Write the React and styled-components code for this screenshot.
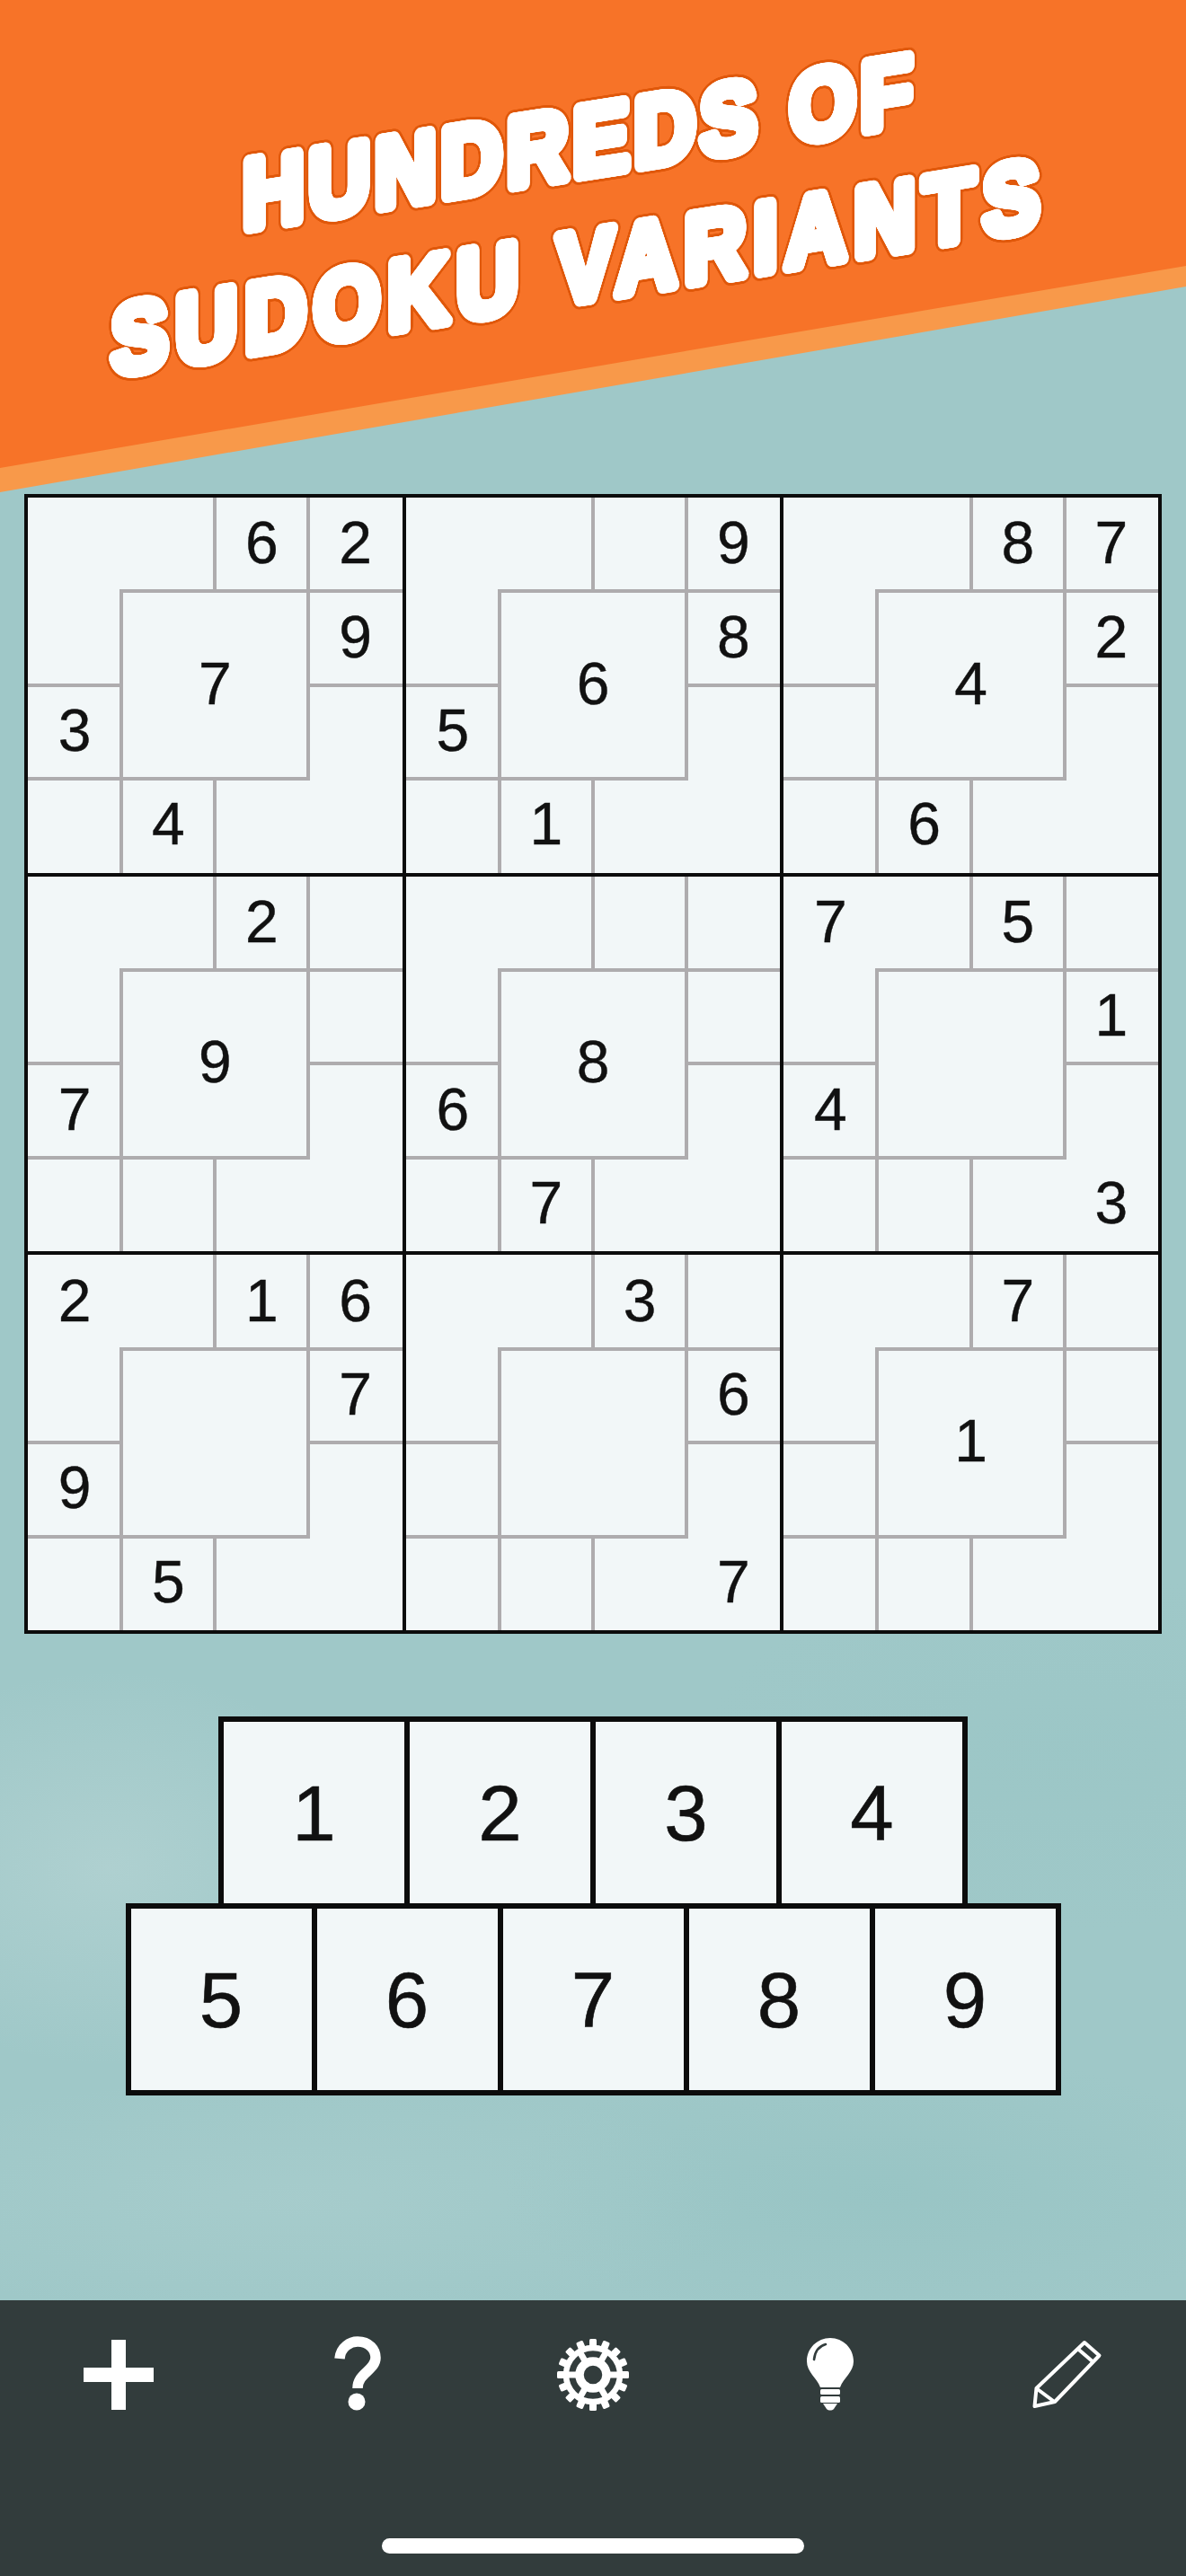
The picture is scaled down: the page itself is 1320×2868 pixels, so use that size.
import React from 'react'
import styled, { createGlobalStyle } from 'styled-components'

const BOXES = [
  '..62.793..4..',
  '...9.685..1..',
  '..87.42...6..',
  '..2..9.7.....',
  '.....8.6..7..',
  '7.5...14....3',
  '2.16..79..5..',
  '..3...6.....7',
  '..7..1.......',
]

// every box has the same regions; order follows the grid's auto placement
const CELLS = [
  {},
  { $right: true },
  { $right: true },
  { $bottom: true },
  { $bottom: true },
  { $center: true },
  { $bottom: true },
  { $bottom: true },
  {},
  { $right: true },
  { $right: true },
  {},
  {},
]

const ring = (radius, steps, color) =>
  Array.from({ length: steps }, (_, i) => {
    const angle = (i / steps) * Math.PI * 2
    const x = (Math.cos(angle) * radius).toFixed(2)
    const y = (Math.sin(angle) * radius).toFixed(2)
    return `${x}px ${y}px 0 ${color}`
  })

const TITLE_SHADOW = [
  ...ring(2.5, 12, '#fff'),
  ...ring(4.5, 24, '#fff'),
  ...ring(6.5, 36, '#fff'),
  ...ring(8, 36, '#e0590c'),
  ...ring(9.5, 44, '#e0590c'),
].join(', ')

function PlusIcon() {
  return (
    <svg width="78" height="78" viewBox="0 0 78 78" fill="#fff">
      <rect x="31" y="0" width="16" height="78" />
      <rect x="0" y="31" width="78" height="16" />
    </svg>
  )
}

function HelpIcon() {
  return (
    <svg width="110" height="110" viewBox="0 0 110 110">
      <path
        d="M37 37C38 24 49 18 57 18C70 18 77 27 77 36C77 50 57 53 57 70"
        fill="none"
        stroke="#fff"
        strokeWidth="11.5"
      />
      <circle cx="56" cy="85" r="9.5" fill="#fff" />
    </svg>
  )
}

function GearIcon() {
  const teeth = Array.from({ length: 16 }, (_, i) => (i * 360) / 16)
  const spokes = [30, 90, 150, 210, 270, 330]
  return (
    <svg width="82" height="82" viewBox="-41 -41 82 82" fill="#fff">
      {teeth.map((deg) => (
        <rect key={deg} x="-4" y="-40" width="8" height="10" rx="1.5" transform={`rotate(${deg})`} />
      ))}
      {spokes.map((deg) => (
        <rect key={deg} x="-3.5" y="-30" width="7" height="16" transform={`rotate(${deg})`} />
      ))}
      <circle r="30" fill="none" stroke="#fff" strokeWidth="6.5" />
      <circle r="15" fill="none" stroke="#fff" strokeWidth="9.5" />
    </svg>
  )
}

function BulbIcon() {
  return (
    <svg width="60" height="82" viewBox="0 0 60 82">
      <path
        fill="#fff"
        d="M30 0C15.6 0 4 11.6 4 26C4 38 15 44 19 55H41C45 44 56 38 56 26C56 11.6 44.4 0 30 0Z"
      />
      <path d="M12 24C13 14 18 9 25 7" fill="none" stroke="#323c3c" strokeWidth="2.6" strokeLinecap="round" />
      <rect x="19" y="57" width="22" height="6" rx="1.5" fill="#fff" />
      <rect x="19" y="65" width="22" height="7" rx="1.5" fill="#fff" />
      <path d="M22 73H38L34 79C32 81 28 81 26 79Z" fill="#fff" />
    </svg>
  )
}

function PencilIcon() {
  return (
    <svg width="78" height="78" viewBox="20 16 78 78" fill="none" stroke="#fff" strokeWidth="4" strokeLinejoin="round">
      <path d="M22.5 90L24.5 70L78 19L94.5 33.5L45 85Z" />
      <path d="M25 70.5L44.5 85" />
      <path d="M70.5 26L88 41" />
    </svg>
  )
}

const ICONS = [PlusIcon, HelpIcon, GearIcon, BulbIcon, PencilIcon]

export default function App() {
  return (
    <Page>
      <GlobalStyle />
      <Banner>
        <BannerFace>
          <TitleLine $spacing={6}>HUNDREDS OF</TitleLine>
          <TitleLine $spacing={10}>SUDOKU VARIANTS</TitleLine>
        </BannerFace>
      </Banner>

      <Board>
        {BOXES.map((digits, boxIndex) => (
          <Box key={boxIndex}>
            {CELLS.map((cell, i) => (
              <Cell key={i} {...cell}>
                {digits[i] === '.' ? '' : digits[i]}
              </Cell>
            ))}
          </Box>
        ))}
      </Board>

      <Pad>
        <PadRow>
          {[1, 2, 3, 4].map((n) => (
            <Key key={n}>{n}</Key>
          ))}
        </PadRow>
        <PadRow>
          {[5, 6, 7, 8, 9].map((n) => (
            <Key key={n}>{n}</Key>
          ))}
        </PadRow>
      </Pad>

      <Toolbar>
        <ToolRow>
          {ICONS.map((Icon, i) => (
            <ToolButton key={i}>
              <Icon />
            </ToolButton>
          ))}
        </ToolRow>
        <HomeBar />
      </Toolbar>
    </Page>
  )
}

const GlobalStyle = createGlobalStyle`
  html, body {
    margin: 0;
    padding: 0;
  }
  body {
    font-family: "Liberation Sans", Arial, sans-serif;
  }
`

const Page = styled.div`
  display: flex;
  flex-direction: column;
  width: 1320px;
  height: 2868px;
  overflow: hidden;
  background-color: #9fc8c8;
  background-image:
    radial-gradient(ellipse 300px 220px at 120px 2080px, rgba(190, 216, 216, 0.5), transparent),
    radial-gradient(ellipse 420px 160px at 980px 2440px, rgba(140, 190, 190, 0.35), transparent),
    radial-gradient(ellipse 500px 140px at 330px 2450px, rgba(182, 212, 212, 0.3), transparent),
    radial-gradient(ellipse 400px 200px at 1180px 1950px, rgba(150, 196, 196, 0.35), transparent);
`

const Banner = styled.header`
  flex: none;
  height: 550px;
  background: #f8994a;
  clip-path: polygon(0 0, 100% 0, 100% 319px, 0 548px);
`

const BannerFace = styled.div`
  display: flex;
  flex-direction: column;
  align-items: center;
  height: 100%;
  box-sizing: border-box;
  padding: 88px 30px 0 0;
  background: #f77328;
  clip-path: polygon(0 0, 100% 0, 100% 296px, 0 521px);
`

const TitleLine = styled.div`
  height: 139px;
  line-height: 139px;
  font-size: 110px;
  font-weight: 700;
  white-space: nowrap;
  letter-spacing: ${({ $spacing }) => $spacing}px;
  color: #fff;
  text-shadow: ${TITLE_SHADOW};
  transform: skewY(-9deg) scaleX(0.86);
`

const Board = styled.section`
  flex: none;
  align-self: center;
  display: grid;
  grid-template-columns: repeat(3, 1fr);
  grid-template-rows: repeat(3, 1fr);
  gap: 4px;
  width: 1266px;
  height: 1269px;
  box-sizing: border-box;
  border: 4px solid #0c0c0c;
  background: #0c0c0c;
`

const Box = styled.div`
  display: grid;
  grid-template-columns: repeat(4, 1fr);
  grid-template-rows: repeat(4, 1fr);
  background: #f2f7f8;
`

const LINE = '#aeacae'

const Cell = styled.div`
  display: flex;
  align-items: center;
  justify-content: center;
  padding-bottom: 4px;
  box-sizing: border-box;
  font-size: 66px;
  line-height: 1;
  color: #111;
  -webkit-text-stroke: 0.4px #111;
  ${({ $center }) =>
    $center &&
    `
    grid-column: span 2;
    grid-row: span 2;
    box-shadow:
      inset 0 0 0 2px ${LINE}, 0 0 0 2px ${LINE};
  `}
  ${({ $right }) => $right && `box-shadow: inset -2px 0 0 ${LINE}, 2px 0 0 ${LINE};`}
  ${({ $bottom }) => $bottom && `box-shadow: inset 0 -2px 0 ${LINE}, 0 2px 0 ${LINE};`}
`

const Pad = styled.section`
  flex: none;
  display: flex;
  flex-direction: column;
  align-items: center;
  margin-top: 92px;
`

const PadRow = styled.div`
  display: flex;
  & + & {
    margin-top: -6px;
  }
`

const Key = styled.div`
  display: flex;
  align-items: center;
  justify-content: center;
  width: 213px;
  height: 214px;
  box-sizing: border-box;
  border: 6px solid #0c0c0c;
  background: #f2f7f8;
  font-size: 87px;
  line-height: 1;
  color: #111;
  -webkit-text-stroke: 0.6px #111;
  & + & {
    margin-left: -6px;
  }
`

const Toolbar = styled.nav`
  flex: none;
  display: flex;
  flex-direction: column;
  align-items: center;
  height: 307px;
  margin-top: auto;
  box-sizing: border-box;
  padding-top: 28px;
  background: #323c3c;
`

const ToolRow = styled.div`
  display: grid;
  grid-template-columns: repeat(5, 1fr);
  width: 100%;
  height: 110px;
`

const ToolButton = styled.div`
  display: flex;
  align-items: center;
  justify-content: center;
`

const HomeBar = styled.div`
  width: 470px;
  height: 17px;
  margin-top: 127px;
  border-radius: 9px;
  background: #fff;
`
